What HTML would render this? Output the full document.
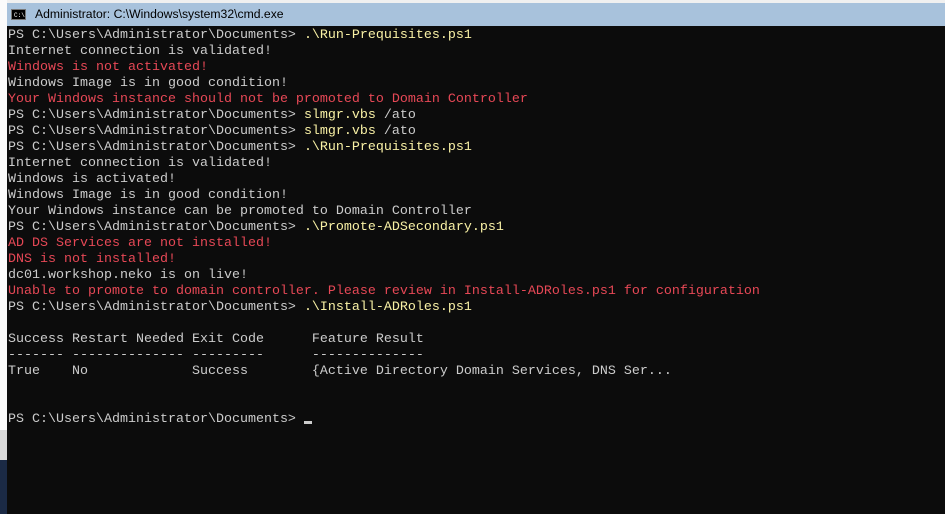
<!DOCTYPE html>
<html><head><style>
html,body{margin:0;padding:0;width:945px;height:514px;overflow:hidden;background:#fff;}
#strip{position:absolute;left:0;top:0;width:8px;height:514px;background:#fbfbfb;}
#strip .b{position:absolute;left:0;top:460px;width:8px;height:54px;background:#1b2a45;}
#strip .g{position:absolute;left:0;top:430px;width:8px;height:30px;background:#d8d8d8;}
#win{position:absolute;left:7px;top:0;width:938px;height:514px;background:#0c0c0c;}
#top{position:absolute;left:0;top:0;width:938px;height:3px;background:#f0f0f0;}
#title{position:absolute;left:0;top:3px;width:938px;height:23px;background:#a8c2dc;font:12.2px "Liberation Sans",sans-serif;color:#000;}
#title span{position:absolute;left:28px;top:4px;}
#icon{position:absolute;left:4px;top:6px;width:15px;height:11px;background:#000;border:1px solid #777;box-sizing:border-box;}
#icon i{position:absolute;left:2px;top:2px;font:6px "Liberation Mono",monospace;color:#fff;font-style:normal;}
pre{position:absolute;left:1px;top:28px;margin:0;font:13.33px/16px "Liberation Mono",monospace;color:#cccccc;}
.y{color:#f9f1a5}.r{color:#e74856}
.cur{display:inline-block;width:8px;height:3px;background:#ccc;vertical-align:-2px;}
</style></head><body>
<div id="strip"><div class="g"></div><div class="b"></div></div>
<div id="win">
<div id="top"></div>
<div id="title"><div id="icon"><i>C:\</i></div><span>Administrator: C:\Windows\system32\cmd.exe</span></div>
<pre>PS C:\Users\Administrator\Documents&gt; <span class="y">.\Run-Prequisites.ps1</span>
Internet connection is validated!
<span class="r">Windows is not activated!</span>
Windows Image is in good condition!
<span class="r">Your Windows instance should not be promoted to Domain Controller</span>
PS C:\Users\Administrator\Documents&gt; <span class="y">slmgr.vbs</span> /ato
PS C:\Users\Administrator\Documents&gt; <span class="y">slmgr.vbs</span> /ato
PS C:\Users\Administrator\Documents&gt; <span class="y">.\Run-Prequisites.ps1</span>
Internet connection is validated!
Windows is activated!
Windows Image is in good condition!
Your Windows instance can be promoted to Domain Controller
PS C:\Users\Administrator\Documents&gt; <span class="y">.\Promote-ADSecondary.ps1</span>
<span class="r">AD DS Services are not installed!</span>
<span class="r">DNS is not installed!</span>
dc01.workshop.neko is on live!
<span class="r">Unable to promote to domain controller. Please review in Install-ADRoles.ps1 for configuration</span>
PS C:\Users\Administrator\Documents&gt; <span class="y">.\Install-ADRoles.ps1</span>

Success Restart Needed Exit Code      Feature Result
------- -------------- ---------      --------------
True    No             Success        {Active Directory Domain Services, DNS Ser...


PS C:\Users\Administrator\Documents&gt; <span class="cur"></span></pre>
</div>
</body></html>
